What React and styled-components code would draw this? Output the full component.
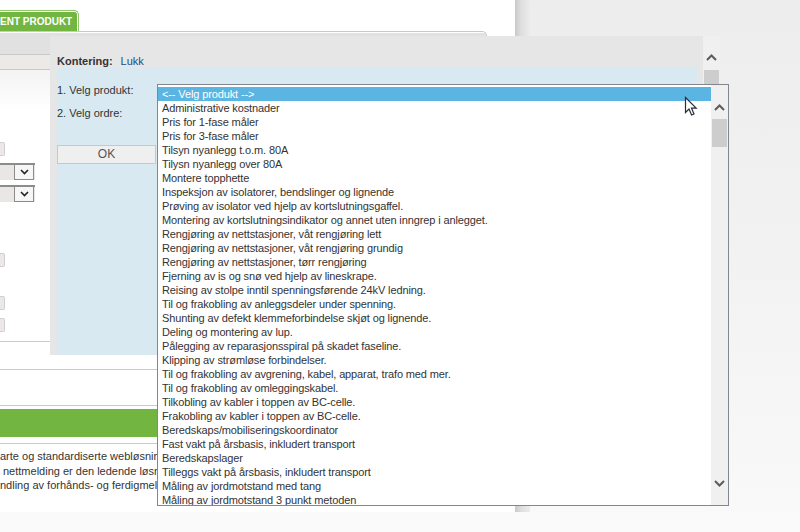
import React from "react";
import styled, { createGlobalStyle } from "styled-components";

const GlobalStyle = createGlobalStyle`
  html, body {
    margin: 0;
    padding: 0;
    background: #fafafa;
  }
  body {
    font-family: "Liberation Sans", Arial, sans-serif;
    font-size: 11px;
    color: #333;
  }
  * {
    box-sizing: border-box;
  }
`;

const Screen = styled.div`
  position: relative;
  width: 800px;
  height: 532px;
  overflow: hidden;
  background: #fafafa;
`;

const Desk = styled.div`
  display: flex;
  height: 512px;
`;

const Page = styled.div`
  width: 515px;
  background: #fff;
  display: flex;
  flex-direction: column;
  overflow: hidden;
`;

const PageShadow = styled.div`
  width: 15px;
  background: linear-gradient(90deg, #c9c9c9 0%, #dedede 40%, #ececec 100%);
`;

const Side = styled.div`
  flex: 1;
  background: linear-gradient(180deg, #ededed 0%, #f2f2f2 50%, #f9f9f9 100%);
`;

const Footer = styled.div`
  height: 20px;
  background: #fafafa;
`;

const TabRow = styled.div`
  height: 31px;
  padding-top: 10px;
  display: flex;
`;

const Tab = styled.div`
  height: 21px;
  width: 79px;
  background: #72b641;
  border: 1px solid #8fc86a;
  border-left: none;
  border-bottom: none;
  border-top-right-radius: 5px;
  box-shadow: inset 0 1px 0 #fff, inset -1px 0 0 #fff;
  color: #fff;
  font-weight: bold;
  font-size: 10px;
  line-height: 19px;
  white-space: nowrap;
  padding-top: 1px;
`;

const Panel = styled.div`
  margin-right: 28px;
  border-top: 1px solid #c9c9c9;
  border-right: 1px solid #c9c9c9;
  border-top-right-radius: 5px;
  display: flex;
  flex-direction: column;
`;

const PanelHead = styled.div`
  height: 22px;
  margin-top: 1px;
  background: #e1e1e1;
  border-bottom: 1px solid #c9c9c9;
`;

const PanelSub = styled.div`
  height: 15px;
  background: #eee9e9;
  border-bottom: 1px solid #c9c9c9;
`;

const FormArea = styled.div`
  display: flex;
  flex-direction: column;
  background: linear-gradient(180deg, #f3f3f3 0px, #fff 40px);
`;

const Field = styled.div`
  width: 5px;
  height: 14px;
  margin-top: ${(p) => p.$top}px;
  background: #ede7e7;
  border: 1px solid #cfcfcf;
  border-left: none;
  border-radius: 0 2px 2px 0;
`;

const Select = styled.div`
  width: 35px;
  height: 17px;
  margin-top: ${(p) => p.$top}px;
  background: #ebe6e6;
  border-top: 2px solid #8c8c8c;
  display: flex;
  justify-content: flex-end;
  padding-right: 1px;
`;

const SelectButton = styled.div`
  width: 20px;
  height: 15px;
  background: #f6f6f6;
  border: 1px solid #8c8c8c;
  border-top: none;
  display: flex;
  align-items: center;
  justify-content: center;
`;

const Rule = styled.div`
  height: 1px;
  flex: none;
  margin-top: ${(p) => p.$top}px;
  background: #cbcbcb;
`;

const GreenBar = styled.div`
  height: 28px;
  flex: none;
  margin-top: ${(p) => p.$top}px;
  background: #72b641;
`;

const Blurb = styled.div`
  margin-top: 5px;
  width: 157px;
  overflow: hidden;
  font-size: 11px;
  line-height: 14.5px;
  color: #333;
  white-space: nowrap;
`;

const BlurbLine = styled.div`
  padding-left: ${(p) => p.$indent || 0}px;
`;

const Modal = styled.div`
  position: absolute;
  left: 50px;
  top: 36px;
  width: 670px;
  height: 319px;
  display: flex;
`;

const ModalMain = styled.div`
  flex: 1;
  background: #e6e6e6;
  padding: 0 6px 0 7px;
  display: flex;
  flex-direction: column;
`;

const ModalHead = styled.div`
  height: 32px;
  display: flex;
  align-items: flex-end;
  padding-bottom: 0;
  gap: 8px;
  line-height: 14px;
`;

const HeadLabel = styled.span`
  font-weight: bold;
  color: #333;
`;

const HeadLink = styled.span`
  color: #1b4a8a;
`;

const ModalBody = styled.div`
  flex: 1;
  background: #d9e9f1;
  display: flex;
  flex-direction: column;
  align-items: flex-start;
`;

const StepLabel = styled.div`
  line-height: 14px;
  margin-top: ${(p) => p.$top}px;
  color: #333;
`;

const OkButton = styled.div`
  width: 99px;
  height: 19px;
  margin-top: 25px;
  background: #efefef;
  border: 1px solid #c8c8c8;
  color: #555;
  font-size: 12px;
  line-height: 17px;
  text-align: center;
`;

const ScrollTrack = styled.div`
  width: 17px;
  background: #f0f0f0;
  display: flex;
  flex-direction: column;
  align-items: center;
`;

const ScrollArrow = styled.div`
  height: ${(p) => p.$h}px;
  width: 100%;
  display: flex;
  align-items: ${(p) => (p.$down ? "flex-end" : "flex-start")};
  justify-content: center;
  padding-top: ${(p) => p.$padTop || 0}px;
  padding-bottom: ${(p) => p.$padBottom || 0}px;
`;

const ScrollThumb = styled.div`
  width: 15px;
  height: ${(p) => p.$h}px;
  background: #cdcdcd;
`;

const ScrollFill = styled.div`
  flex: 1;
`;

const ListBox = styled.div`
  position: absolute;
  left: 157px;
  top: 84px;
  width: 572px;
  height: 422px;
  background: #fff;
  border: 1px solid #82878f;
  display: flex;
`;

const Options = styled.div`
  flex: 1;
  padding-top: 2px;
  overflow: hidden;
`;

const Option = styled.div`
  height: 14px;
  line-height: 14px;
  padding-left: 4px;
  white-space: nowrap;
  letter-spacing: -0.12px;
  color: ${(p) => (p.$selected ? "#fff" : "#333")};
  background: ${(p) => (p.$selected ? "#5bb5e3" : "transparent")};
`;

const Pointer = styled.svg`
  position: absolute;
  left: 684px;
  top: 96px;
`;

const products = [
  "<-- Velg produkt -->",
  "Administrative kostnader",
  "Pris for 1-fase måler",
  "Pris for 3-fase måler",
  "Tilsyn nyanlegg t.o.m. 80A",
  "Tilysn nyanlegg over 80A",
  "Montere topphette",
  "Inspeksjon av isolatorer, bendslinger og lignende",
  "Prøving av isolator ved hjelp av kortslutningsgaffel.",
  "Montering av kortslutningsindikator og annet uten inngrep i anlegget.",
  "Rengjøring av nettstasjoner, våt rengjøring lett",
  "Rengjøring av nettstasjoner, våt rengjøring grundig",
  "Rengjøring av nettstasjoner, tørr rengjøring",
  "Fjerning av is og snø ved hjelp av lineskrape.",
  "Reising av stolpe inntil spenningsførende 24kV ledning.",
  "Til og frakobling av anleggsdeler under spenning.",
  "Shunting av defekt klemmeforbindelse skjøt og lignende.",
  "Deling og montering av lup.",
  "Pålegging av reparasjonsspiral på skadet faseline.",
  "Klipping av strømløse forbindelser.",
  "Til og frakobling av avgrening, kabel, apparat, trafo med mer.",
  "Til og frakobling av omleggingskabel.",
  "Tilkobling av kabler i toppen av BC-celle.",
  "Frakobling av kabler i toppen av BC-celle.",
  "Beredskaps/mobiliseringskoordinator",
  "Fast vakt på årsbasis, inkludert transport",
  "Beredskapslager",
  "Tilleggs vakt på årsbasis, inkludert transport",
  "Måling av jordmotstand med tang",
  "Måling av jordmotstand 3 punkt metoden",
];

function Chevron({ down, color = "#5c5c5c" }) {
  return (
    <svg width="11" height="7" viewBox="0 0 11 7">
      <polyline
        points={down ? "1,1 5.5,5.5 10,1" : "1,6 5.5,1.5 10,6"}
        fill="none"
        stroke={color}
        strokeWidth="2"
      />
    </svg>
  );
}

function SmallChevron() {
  return (
    <svg width="9" height="6" viewBox="0 0 9 6">
      <polyline points="1,1 4.5,4.5 8,1" fill="none" stroke="#222" strokeWidth="1.6" />
    </svg>
  );
}

export default function App() {
  return (
    <>
      <GlobalStyle />
      <Screen>
        <Desk>
          <Page>
            <TabRow>
              <Tab>ENT PRODUKT</Tab>
            </TabRow>
            <Panel>
              <PanelHead />
              <PanelSub />
              <FormArea>
                <Field $top={72} />
                <Select $top={7}>
                  <SelectButton>
                    <SmallChevron />
                  </SelectButton>
                </Select>
                <Select $top={5}>
                  <SelectButton>
                    <SmallChevron />
                  </SelectButton>
                </Select>
                <Field $top={51} />
                <Field $top={29} />
                <Field $top={8} />
                <Rule $top={9} />
              </FormArea>
            </Panel>
            <Rule $top={27} />
            <Rule $top={35} />
            <GreenBar $top={3} />
            <Rule $top={6} />
            <Blurb>
              <BlurbLine>arte og standardiserte webløsninger</BlurbLine>
              <BlurbLine $indent={3}>nettmelding er den ledende løsning</BlurbLine>
              <BlurbLine>ndling av forhånds- og ferdigmeldinger</BlurbLine>
            </Blurb>
          </Page>
          <PageShadow />
          <Side />
        </Desk>
        <Footer />

        <Modal>
          <ModalMain>
            <ModalHead>
              <HeadLabel>Kontering:</HeadLabel>
              <HeadLink>Lukk</HeadLink>
            </ModalHead>
            <ModalBody>
              <StepLabel $top={15}>1. Velg produkt:</StepLabel>
              <StepLabel $top={9}>2. Velg ordre:</StepLabel>
              <OkButton>OK</OkButton>
            </ModalBody>
          </ModalMain>
          <ScrollTrack>
            <ScrollArrow $h={34} $padTop={18}>
              <Chevron />
            </ScrollArrow>
            <ScrollThumb $h={40} />
            <ScrollFill />
          </ScrollTrack>
        </Modal>

        <ListBox>
          <Options>
            {products.map((p, i) => (
              <Option key={i} $selected={i === 0}>
                {p}
              </Option>
            ))}
          </Options>
          <ScrollTrack>
            <ScrollArrow $h={34} $padTop={19}>
              <Chevron />
            </ScrollArrow>
            <ScrollThumb $h={28} />
            <ScrollFill />
            <ScrollArrow $h={30} $down $padBottom={18}>
              <Chevron down />
            </ScrollArrow>
          </ScrollTrack>
        </ListBox>

        <Pointer width="14" height="21" viewBox="0 0 14 21">
          <path
            d="M1.5 1.5 L1.5 16.5 L5 13 L7.6 19 L10 18 L7.5 12.2 L12.2 12.2 Z"
            fill="#fff"
            stroke="#2b2b3a"
            strokeWidth="1.2"
            strokeLinejoin="miter"
          />
        </Pointer>
      </Screen>
    </>
  );
}
